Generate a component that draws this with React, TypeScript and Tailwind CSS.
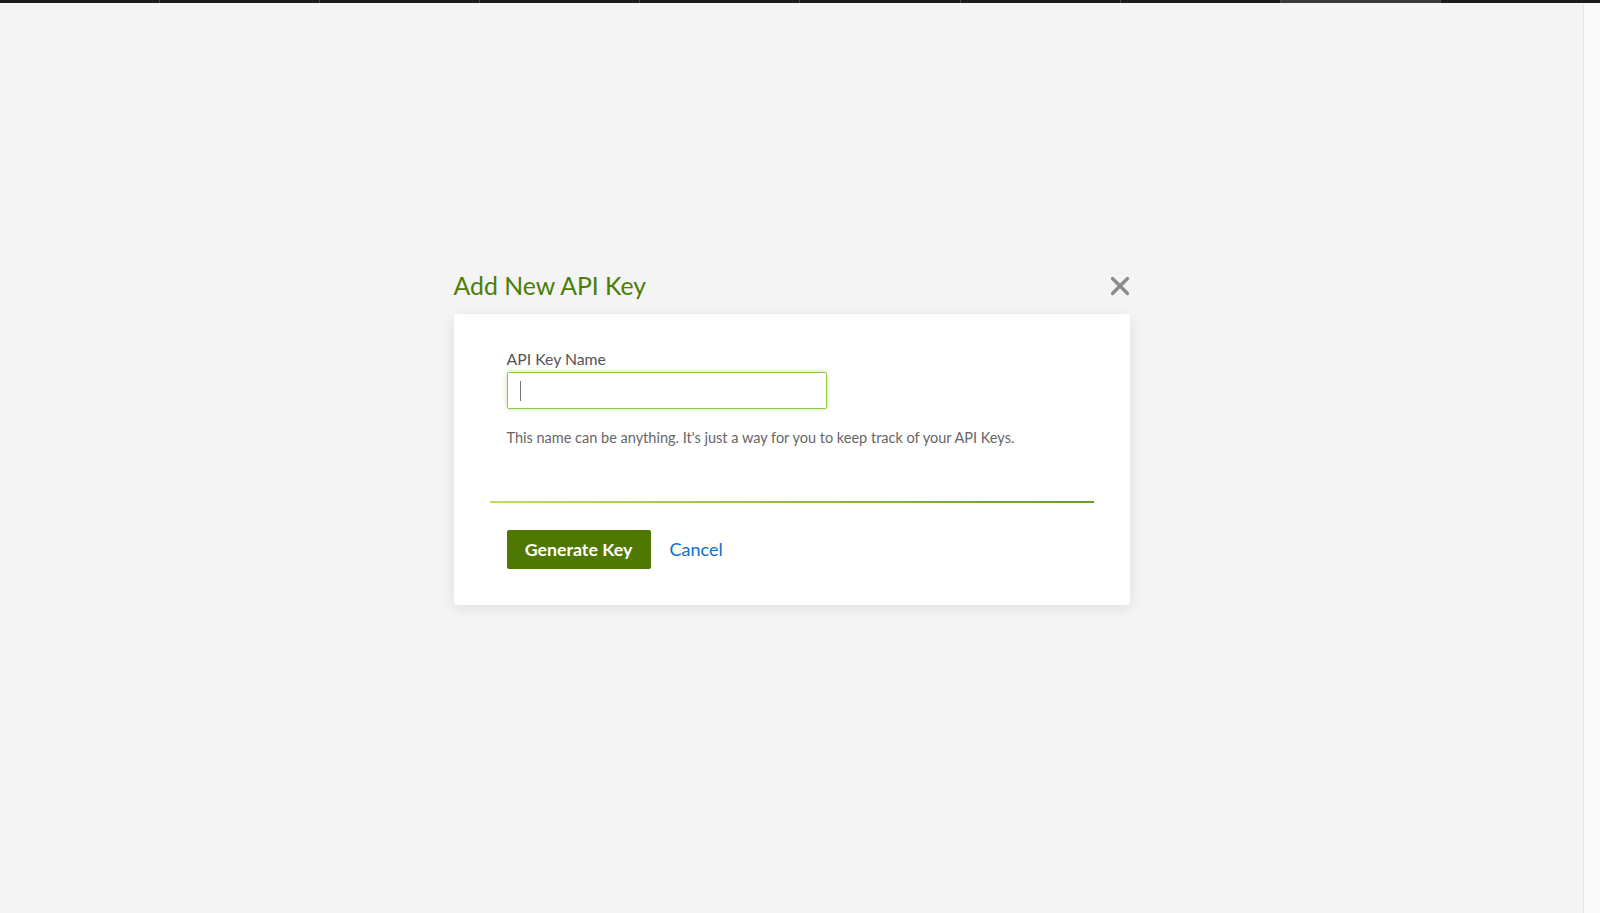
// ─── Top loading strip ─────────────────────────────────────────────────────────

function TopStrip() {
  const segments = [0, 1, 2, 3, 4, 5, 6, 7, 8, 9];
  return (
    <div className="flex h-[3px] w-full shrink-0 bg-[#1b1b1b]">
      {segments.map(i => (
        <div
          key={i}
          className={`h-full flex-1 border-l border-[#4a4a4a] first:border-l-0 ${i === 8 ? 'bg-[#3a3a3a]' : 'bg-[#1b1b1b]'}`}
        />
      ))}
    </div>
  );
}

function CloseIcon() {
  return (
    <svg width="20" height="20" viewBox="0 0 20 20" fill="none" stroke="#8a8a8a" strokeWidth="3.2" strokeLinecap="round">
      <path d="M2.5 2.5 L17.5 17.5 M17.5 2.5 L2.5 17.5" />
    </svg>
  );
}

// ─── Modal ─────────────────────────────────────────────────────────────────────

function AddKeyModal() {
  return (
    <div className="w-[676px]">
      <div className="mb-[10px] flex h-9 items-center justify-between">
        <h2 className="text-[24.8px] font-normal leading-none text-[#4b7d08]">Add New API Key</h2>
        <button aria-label="Close" className="flex h-5 w-5 items-center justify-center">
          <CloseIcon />
        </button>
      </div>

      <div className="rounded-[2px] bg-white px-9 pt-[35px] pb-[36px] shadow-[0_3px_14px_rgba(0,0,0,0.09)]">
        <div className="px-[17px]">
          <label className="mb-[4px] block text-[15.8px] leading-[19px] text-[#555]">API Key Name</label>
          <div className="flex h-[37px] w-[320px] items-center rounded-[2px] border border-[#93c94a] pl-[12px] shadow-[0_0_4px_rgba(140,198,63,0.55)]">
            <span className="h-[20px] w-px bg-[#777]" />
          </div>
          <p className="mt-[19px] text-[14.5px] leading-[20px] text-[#666]">
            This name can be anything. It's just a way for you to keep track of your API Keys.
          </p>
        </div>

        <div className="mt-[53px] h-[2px] w-full bg-linear-to-r from-[#b9e15e] to-[#6c9a2a]" />

        <div className="mt-[27px] flex items-center gap-[19px] px-[17px]">
          <button className="h-[39px] w-[144px] rounded-[2px] bg-[#4f7800] text-[17.8px] font-bold text-white">
            Generate Key
          </button>
          <button className="text-[18px] text-[#0b6fc2]">Cancel</button>
        </div>
      </div>
    </div>
  );
}

// ─── Page ──────────────────────────────────────────────────────────────────────

export default function App() {
  return (
    <div className="flex h-[913px] w-full flex-col overflow-hidden bg-[#f4f4f4] font-['Lato','Noto_Sans',sans-serif]">
      <TopStrip />
      <div className="flex min-h-0 flex-1">
        <main className="flex flex-1 justify-center pt-[265px]">
          <AddKeyModal />
        </main>
        <div className="w-[17px] border-l border-[#e6e6e6] bg-[#fafafa]" />
      </div>
    </div>
  );
}
